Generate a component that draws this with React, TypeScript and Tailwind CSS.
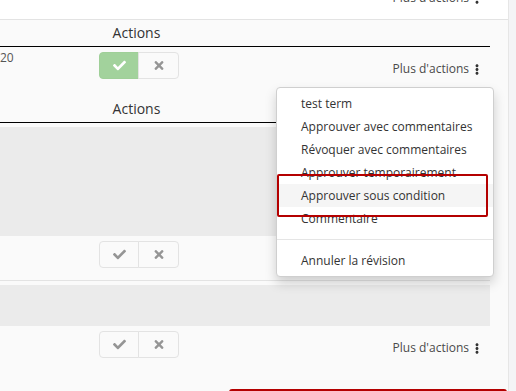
import { FaCheck, FaTimes, FaEllipsisV } from 'react-icons/fa'

const menuItems = [
  'test term',
  'Approuver avec commentaires',
  'Révoquer avec commentaires',
  'Approuver temporairement',
  'Approuver sous condition',
  'Commentaire',
]

function ActionButtons({ approved }: { approved?: boolean }) {
  return (
    <div className="flex">
      <button
        className={
          approved
            ? 'flex h-[27px] w-[40px] items-center justify-center rounded-l-[4px] border border-[#9fcf98] bg-[#a2d29c] text-white'
            : 'flex h-[27px] w-[40px] items-center justify-center rounded-l-[4px] border border-[#e3e3e3] bg-[#fafafa] text-[#959595]'
        }
      >
        <FaCheck className="h-[13px] w-[13px]" />
      </button>
      <button className="-ml-px flex h-[27px] w-[41px] items-center justify-center rounded-r-[4px] border border-[#e3e3e3] bg-[#fafafa] text-[#959595]">
        <FaTimes className="h-[13px] w-[12px]" />
      </button>
    </div>
  )
}

function MoreActions() {
  return (
    <div className="flex items-center justify-end gap-[6px] text-[12px] leading-[16px] text-[#4a4a4a]">
      <span>Plus d'actions</span>
      <FaEllipsisV className="h-[11px] w-[4px] text-[#333]" />
    </div>
  )
}

function HeaderRow() {
  return (
    <div className="flex h-[27px] items-center border-b border-black">
      <div className="w-[99px]" />
      <div className="w-[75px] text-center text-[14px] leading-[20px] text-[#333]">Actions</div>
    </div>
  )
}

export default function App() {
  return (
    <div className="flex h-[391px] w-[516px] overflow-hidden bg-[#fafafa] font-['Open_Sans',sans-serif] text-[#333]">
      <div className="relative w-[508px] shrink-0">
        {/* top strip, scrolled past */}
        <div className="flex h-[20px] flex-col overflow-hidden border-b border-[#e3e3e3] bg-white pr-[29px]">
          <div className="-mt-[10px]">
            <MoreActions />
          </div>
        </div>

        <div className="w-[490px]">
          {/* first table */}
          <HeaderRow />
          <div className="flex h-[49px]">
            <div className="w-[99px] pt-[3px] text-[12px] leading-[16px] text-[#555]">20</div>
            <div className="pt-[5px]">
              <ActionButtons approved />
            </div>
            <div className="flex-1 pr-[11px] pt-[14px]">
              <MoreActions />
            </div>
          </div>

          {/* second table */}
          <HeaderRow />
          <div className="mt-[4px] h-[109px] bg-[#ebebeb]" />
          <div className="flex h-[45px] border-b border-[#e3e3e3]">
            <div className="w-[99px]" />
            <div className="pt-[5px]">
              <ActionButtons />
            </div>
            <div className="flex-1 pr-[11px] pt-[14px]">
              <MoreActions />
            </div>
          </div>
          <div className="mt-[4px] h-[41px] bg-[#ebebeb]" />
          <div className="flex h-[48px]">
            <div className="w-[99px]" />
            <div className="pt-[5px]">
              <ActionButtons />
            </div>
            <div className="flex-1 pr-[11px] pt-[14px]">
              <MoreActions />
            </div>
          </div>
        </div>

        <div className="mt-[15px] flex justify-end pr-[1px]">
          <div className="h-[10px] w-[278px] rounded-t-[3px] border-x-2 border-t-[3px] border-[#b40000]" />
        </div>

        {/* dropdown menu */}
        <div className="absolute left-[276px] top-[87px] w-[218px] rounded-[4px] border border-[#cfcfcf] bg-white py-[4px] shadow-[0_6px_12px_rgba(0,0,0,0.175)]">
          {menuItems.map((item) => (
            <div
              key={item}
              className={
                item === 'Approuver sous condition'
                  ? 'bg-[#f5f5f5] py-[3px] pl-[24px] text-[12px] leading-[17px] text-[#333]'
                  : 'py-[3px] pl-[24px] text-[12px] leading-[17px] text-[#333]'
              }
            >
              {item}
            </div>
          ))}
          <div className="my-[9px] h-px bg-[#e5e5e5]" />
          <div className="py-[3px] pl-[24px] text-[12px] leading-[17px] text-[#333]">Annuler la révision</div>
        </div>

        {/* highlight annotation */}
        <div className="absolute left-[277px] top-[174px] h-[43px] w-[211px] rounded-[2px] border-2 border-[#b40000]" />
      </div>
      <div className="flex-1 border-l border-[#e6e6e6] bg-[#f4f4f6]" />
    </div>
  )
}
